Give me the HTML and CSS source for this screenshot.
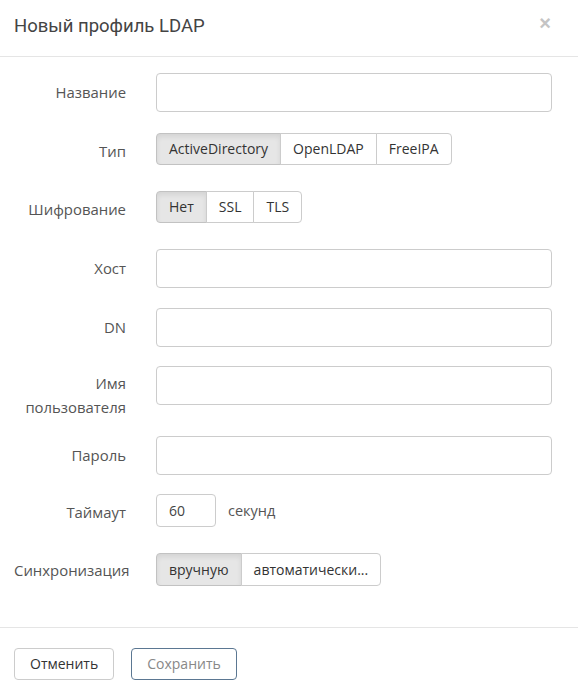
FILE: index.html
```html
<!DOCTYPE html>
<html lang="ru">
<head>
<meta charset="utf-8">
<title>Новый профиль LDAP</title>
<link rel="stylesheet" href="styles.css">
</head>
<body>
<div class="modal">
  <div class="modal-header">
    <h4 class="modal-title">Новый профиль LDAP</h4>
    <span class="close">×</span>
  </div>
  <div class="modal-body">
    <div class="row row-first">
      <label class="lbl">Название</label>
      <div class="ctl"><input class="input" type="text"></div>
    </div>
    <div class="row row-btn">
      <label class="lbl">Тип</label>
      <div class="ctl">
        <div class="btn-group">
          <span class="btn active">ActiveDirectory</span><span class="btn">OpenLDAP</span><span class="btn">FreeIPA</span>
        </div>
      </div>
    </div>
    <div class="row row-btn">
      <label class="lbl">Шифрование</label>
      <div class="ctl">
        <div class="btn-group">
          <span class="btn active">Нет</span><span class="btn">SSL</span><span class="btn">TLS</span>
        </div>
      </div>
    </div>
    <div class="row">
      <label class="lbl">Хост</label>
      <div class="ctl"><input class="input" type="text"></div>
    </div>
    <div class="row row-tight">
      <label class="lbl">DN</label>
      <div class="ctl"><input class="input" type="text"></div>
    </div>
    <div class="row row-tall">
      <label class="lbl lbl-two">Имя пользователя</label>
      <div class="ctl"><input class="input" type="text"></div>
    </div>
    <div class="row row-tight">
      <label class="lbl">Пароль</label>
      <div class="ctl"><input class="input" type="password"></div>
    </div>
    <div class="row row-btn">
      <label class="lbl">Таймаут</label>
      <div class="ctl ctl-inline">
        <input class="input input-small" type="text" value="60">
        <span class="unit">секунд</span>
      </div>
    </div>
    <div class="row row-last">
      <label class="lbl">Синхронизация</label>
      <div class="ctl">
        <div class="btn-group">
          <span class="btn active">вручную</span><span class="btn">автоматически...</span>
        </div>
      </div>
    </div>
  </div>
  <div class="modal-footer">
    <span class="fbtn">Отменить</span>
    <span class="fbtn fbtn-save">Сохранить</span>
  </div>
</div>
</body>
</html>
```

FILE: styles.css
```css
* { box-sizing: border-box; }
html, body { margin: 0; padding: 0; background: #fff; }
body {
  font-family: "Open Sans", "Liberation Sans", sans-serif;
  font-size: 14px;
  color: #333;
}
.modal { width: 578px; }
.modal-header {
  height: 57px;
  border-bottom: 1px solid #e5e5e5;
  display: flex;
  align-items: center;
  justify-content: space-between;
  padding: 0 26px 4px 14px;
}
.modal-title {
  margin: 0;
  font-family: Roboto, "Open Sans", sans-serif;
  font-weight: 400;
  font-size: 18.5px;
  color: #444;
}
.close {
  font-family: "Liberation Sans", sans-serif;
  font-size: 20px;
  font-weight: 700;
  color: #c4c4c4;
  line-height: 1;
  margin-top: -6px;
  margin-right: 1px;
}
.modal-body { padding: 16px 26px 41px 14px; }
.row {
  display: flex;
  align-items: flex-start;
  margin-bottom: 20px;
}
.row-first { margin-bottom: 21px; }
.row-tight { margin-bottom: 19px; }
.row-btn { margin-bottom: 26px; }
.row-tall { margin-bottom: 17px; }
.row-last { margin-bottom: 0; }
.lbl {
  width: 112px;
  flex: none;
  text-align: right;
  color: #555;
  font-size: 14.9px;
  line-height: 24px;
  padding-top: 7px;
  margin-right: 30px;
}
.row-btn .lbl { padding-top: 6px; }
.row-last .lbl { padding-top: 5px; }
.lbl-two { padding-top: 5px; }
.ctl { flex: 1; }
.ctl-inline { display: flex; align-items: center; }
.input {
  display: block;
  width: 100%;
  height: 39px;
  border: 1px solid #ccc;
  border-radius: 4px;
  font-family: "Open Sans", sans-serif;
  font-size: 14px;
  color: #444;
  padding: 0 12px;
  background: #fff;
}
.input-small { width: 60px; height: 33px; padding: 0 12px; }
.unit { margin-left: 12px; color: #555; font-size: 14.5px; }
.btn-group { display: inline-flex; }
.btn {
  display: inline-block;
  height: 32px;
  line-height: 30px;
  padding: 0 12px;
  border: 1px solid #ccc;
  background: #fff;
  color: #333;
  font-size: 14px;
  margin-left: -1px;
}
.btn:first-child { margin-left: 0; border-radius: 4px 0 0 4px; }
.btn:last-child { border-radius: 0 4px 4px 0; }
.btn.active {
  background: #e6e6e6;
  border-color: #c2c2c2;
  box-shadow: inset 0 3px 5px rgba(0,0,0,0.08);
}
.row-last .btn { height: 33px; line-height: 31px; }
.modal-footer {
  border-top: 1px solid #e5e5e5;
  padding: 20px 14px 0;
  display: flex;
  gap: 17px;
}
.fbtn {
  display: inline-block;
  height: 32px;
  line-height: 30px;
  padding: 0 15px;
  border: 1px solid #ccc;
  border-radius: 4px;
  font-size: 14px;
  color: #333;
}
.fbtn-save { border-color: #5b7792; color: #888; }
```
